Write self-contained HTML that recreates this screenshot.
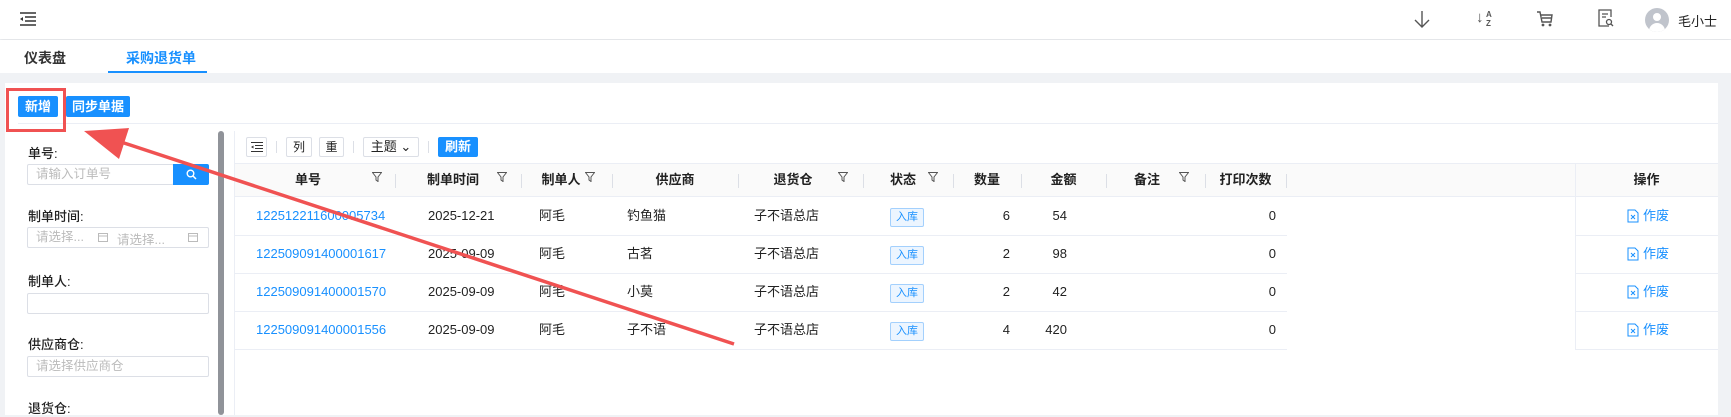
<!DOCTYPE html>
<html><head><meta charset="utf-8"><style>
*{box-sizing:border-box;margin:0;padding:0}
body{width:1731px;height:415px;overflow:hidden;background:#f0f2f5;font-family:"Liberation Sans","Noto Sans CJK SC",sans-serif;font-size:13px;color:#222;position:relative}
.a{position:absolute}
.hdr{left:0;top:0;width:1731px;height:39px;background:#fff;box-shadow:0 1px 3px rgba(0,0,0,.08)}
.tabs{left:0;top:40px;width:1731px;height:33px;background:#fff}
.panel{left:5px;top:83px;width:1713px;height:332px;background:#fff}
.btn{background:#1890ff;color:#fff;font-weight:bold;font-size:13px;text-align:center;line-height:21px;height:21px;border-radius:2px}
.lbl{font-size:13px;color:#222;font-weight:500}
.inp{border:1px solid #dcdfe6;border-radius:2px;height:21px;background:#fff;color:#bbb;font-size:12.5px;line-height:19px;padding-left:8px}
.tb{border:1px solid #dcdfe6;border-radius:2px;height:20px;background:#fff;font-size:12px;text-align:center;line-height:18px}
.th{top:163px;height:34px;background:#fafafa;border-top:1px solid #ebeef5;border-bottom:1px solid #ebeef5}
.hc{top:171px;height:18px;line-height:18px;font-weight:bold;text-align:center}
.sep{top:174px;width:1px;height:14px;background:#dcdfe6}
.flt{top:172px;width:10px;height:10px}
.rl{height:1px;background:#ebeef5}
.c{height:18px;line-height:18px;font-size:13px}
.lnk{color:#1890ff}
.tag{border:1px solid #a3d0fd;background:#ecf5ff;color:#1890ff;font-size:11px;width:34px;height:19px;line-height:17px;text-align:center;border-radius:2px}
.op{color:#1890ff;font-size:13px}
</style></head><body>
<svg width="0" height="0" style="position:absolute"><defs><symbol id="f" viewBox="0 0 10 10"><path d="M0.5 0.5H9.5L6 5V9.5L4 8V5Z" fill="none" stroke="#555" stroke-width="1"/></symbol>
<symbol id="d" viewBox="0 0 12 14"><path d="M1 1H8L11 4V13H1Z" fill="none" stroke="#1890ff" stroke-width="1"/><path d="M4 6L8 10M8 6L4 10" stroke="#1890ff" stroke-width="1"/></symbol></defs></svg>
<div class="a hdr"></div>
<svg class="a" style="left:20px;top:12px" width="16" height="14" viewBox="0 0 16 14"><path d="M0 1H16M5 5H16M5 9H16M0 13H16" stroke="#333" stroke-width="1.5"/><path d="M0 7L3 5V9Z" fill="#333"/></svg>
<svg class="a" style="left:1414px;top:10px" width="16" height="18" viewBox="0 0 16 18"><path d="M8 1V17M1 10L8 17L15 10" stroke="#555" stroke-width="1.4" fill="none"/></svg>
<div class="a" style="left:1476px;top:9px;font-size:10px;color:#555;line-height:9px"><span style="font-size:15px;line-height:18px">↓</span></div>
<div class="a" style="left:1486px;top:10px;font-size:8px;color:#555;line-height:9px;font-weight:bold">A<br>Z</div>
<svg class="a" style="left:1536px;top:10px" width="18" height="18" viewBox="0 0 18 18"><path d="M1 2H4L6 12H15L16 5H5M6 8H15" stroke="#555" stroke-width="1.4" fill="none"/><circle cx="7" cy="15" r="1.4" fill="#555"/><circle cx="14" cy="15" r="1.4" fill="#555"/></svg>
<svg class="a" style="left:1597px;top:8px" width="18" height="20" viewBox="0 0 18 20"><path d="M12 18H2V2H14V9M5 6H11M5 9H9" stroke="#555" stroke-width="1.3" fill="none"/><circle cx="12" cy="14" r="2.5" stroke="#555" stroke-width="1.3" fill="none"/><path d="M14 16L16 18" stroke="#555" stroke-width="1.3"/></svg>
<div class="a" style="left:1645px;top:8px;width:24px;height:24px;border-radius:50%;background:#c0c4cc;overflow:hidden"><div class="a" style="left:8px;top:5px;width:8px;height:8px;border-radius:50%;background:#fff"></div><div class="a" style="left:4px;top:15px;width:16px;height:12px;border-radius:8px 8px 0 0;background:#fff"></div></div>
<div class="a" style="left:1678px;top:11px;font-size:13px">毛小士</div>
<div class="a tabs"></div>
<div class="a" style="left:24px;top:48px;font-size:14px;font-weight:bold;color:#333">仪表盘</div>
<div class="a" style="left:126px;top:48px;font-size:14px;font-weight:bold;color:#1890ff">采购退货单</div>
<div class="a" style="left:108px;top:71px;width:99px;height:2px;background:#1890ff"></div>
<div class="a panel"></div>
<div class="a btn" style="left:18px;top:96px;width:40px">新增</div>
<div class="a btn" style="left:66px;top:96px;width:64px">同步单据</div>
<div class="a" style="left:18px;top:123px;width:1700px;height:1px;background:#ebeef5"></div>
<div class="a" style="left:218px;top:131px;width:6px;height:284px;background:#909399;border-radius:3px"></div>
<div class="a" style="left:234px;top:131px;width:1px;height:284px;background:#ebeef5"></div>
<div class="a lbl" style="left:28px;top:143px">单号:</div>
<div class="a inp" style="left:27px;top:164px;width:147px">请输入订单号</div>
<div class="a" style="left:173px;top:164px;width:36px;height:21px;background:#1890ff;border-radius:0 2px 2px 0"><svg class="a" style="left:13px;top:5px" width="11" height="11" viewBox="0 0 11 11"><circle cx="4.5" cy="4.5" r="3.3" fill="none" stroke="#fff" stroke-width="1.4"/><path d="M7 7L10 10" stroke="#fff" stroke-width="1.5"/></svg></div>
<div class="a lbl" style="left:28px;top:206px">制单时间:</div>
<div class="a inp" style="left:27px;top:227px;width:182px">请选择...</div>
<div class="a" style="left:117px;top:229px;color:#bbb;font-size:12.5px">请选择...</div>
<svg class="a" style="left:98px;top:232px" width="10" height="10"><rect x="0.5" y="1.5" width="9" height="8" fill="none" stroke="#bbb"/><path d="M0 4H10" stroke="#bbb"/></svg>
<svg class="a" style="left:188px;top:232px" width="10" height="10"><rect x="0.5" y="1.5" width="9" height="8" fill="none" stroke="#bbb"/><path d="M0 4H10" stroke="#bbb"/></svg>
<div class="a lbl" style="left:28px;top:271px">制单人:</div>
<div class="a inp" style="left:27px;top:293px;width:182px"></div>
<div class="a lbl" style="left:28px;top:334px">供应商仓:</div>
<div class="a inp" style="left:27px;top:356px;width:182px">请选择供应商仓</div>
<div class="a lbl" style="left:28px;top:398px">退货仓:</div>
<div class="a tb" style="left:246px;top:137px;width:21px"><svg style="margin-top:4px" width="12" height="10" viewBox="0 0 12 10"><path d="M0 0.5H12M4 3.5H12M4 6.5H12M0 9.5H12" stroke="#333"/><path d="M0 5L2.5 3.5V6.5Z" fill="#333"/></svg></div>
<div class="a" style="left:276px;top:141px;width:1px;height:12px;background:#dcdfe6"></div>
<div class="a tb" style="left:286px;top:137px;width:26px">列</div>
<div class="a tb" style="left:319px;top:137px;width:25px">重</div>
<div class="a" style="left:353px;top:141px;width:1px;height:12px;background:#dcdfe6"></div>
<div class="a tb" style="left:363px;top:137px;width:56px;font-size:13px">主题 ⌄</div>
<div class="a" style="left:428px;top:141px;width:1px;height:12px;background:#dcdfe6"></div>
<div class="a btn" style="left:438px;top:137px;width:40px;height:20px;line-height:20px">刷新</div>
<div class="a th" style="left:235px;width:1052px"></div>
<div class="a th" style="left:1287px;width:288px;background:#fafafa"></div>
<div class="a th" style="left:1575px;width:143px;border-left:1px solid #ebeef5"></div>
<div class="a hc" style="left:235px;width:146px">单号</div><svg class="a flt" style="left:372px"><use href="#f"/></svg><div class="a sep" style="left:395px"></div>
<div class="a hc" style="left:408px;width:90px">制单时间</div><svg class="a flt" style="left:497px"><use href="#f"/></svg><div class="a sep" style="left:521px"></div>
<div class="a hc" style="left:530px;width:62px">制单人</div><svg class="a flt" style="left:585px"><use href="#f"/></svg><div class="a sep" style="left:612px"></div>
<div class="a hc" style="left:612px;width:126px">供应商</div><div class="a sep" style="left:738px"></div>
<div class="a hc" style="left:738px;width:110px">退货仓</div><svg class="a flt" style="left:838px"><use href="#f"/></svg><div class="a sep" style="left:863px"></div>
<div class="a hc" style="left:870px;width:66px">状态</div><svg class="a flt" style="left:928px"><use href="#f"/></svg><div class="a sep" style="left:953px"></div>
<div class="a hc" style="left:953px;width:68px">数量</div><div class="a sep" style="left:1021px"></div>
<div class="a hc" style="left:1021px;width:85px">金额</div><div class="a sep" style="left:1106px"></div>
<div class="a hc" style="left:1110px;width:74px">备注</div><svg class="a flt" style="left:1179px"><use href="#f"/></svg><div class="a sep" style="left:1205px"></div>
<div class="a hc" style="left:1205px;width:81px">打印次数</div><div class="a sep" style="left:1286px"></div>
<div class="a hc" style="left:1575px;width:143px">操作</div>

<div class="a rl" style="left:235px;top:235px;width:1052px"></div><div class="a rl" style="left:1575px;top:235px;width:143px"></div>
<div class="a rl" style="left:235px;top:273px;width:1052px"></div><div class="a rl" style="left:1575px;top:273px;width:143px"></div>
<div class="a rl" style="left:235px;top:311px;width:1052px"></div><div class="a rl" style="left:1575px;top:311px;width:143px"></div>
<div class="a rl" style="left:235px;top:349px;width:1052px"></div><div class="a rl" style="left:1575px;top:349px;width:143px"></div>
<div class="a" style="left:1575px;top:197px;width:1px;height:152px;background:#ebeef5"></div>

<div class="a c lnk" style="left:256px;top:207px">122512211600005734</div><div class="a c" style="left:428px;top:207px">2025-12-21</div><div class="a c" style="left:539px;top:207px">阿毛</div><div class="a c" style="left:627px;top:207px">钓鱼猫</div><div class="a c" style="left:754px;top:207px">子不语总店</div><div class="a tag" style="left:890px;top:208px">入库</div><div class="a c" style="left:953px;top:207px;width:57px;text-align:right">6</div><div class="a c" style="left:1021px;top:207px;width:46px;text-align:right">54</div><div class="a c" style="left:1205px;top:207px;width:71px;text-align:right">0</div><svg class="a" style="left:1627px;top:209px" width="12" height="14"><use href="#d"/></svg><div class="a c op" style="left:1643px;top:207px">作废</div>
<div class="a c lnk" style="left:256px;top:245px">122509091400001617</div><div class="a c" style="left:428px;top:245px">2025-09-09</div><div class="a c" style="left:539px;top:245px">阿毛</div><div class="a c" style="left:627px;top:245px">古茗</div><div class="a c" style="left:754px;top:245px">子不语总店</div><div class="a tag" style="left:890px;top:246px">入库</div><div class="a c" style="left:953px;top:245px;width:57px;text-align:right">2</div><div class="a c" style="left:1021px;top:245px;width:46px;text-align:right">98</div><div class="a c" style="left:1205px;top:245px;width:71px;text-align:right">0</div><svg class="a" style="left:1627px;top:247px" width="12" height="14"><use href="#d"/></svg><div class="a c op" style="left:1643px;top:245px">作废</div>
<div class="a c lnk" style="left:256px;top:283px">122509091400001570</div><div class="a c" style="left:428px;top:283px">2025-09-09</div><div class="a c" style="left:539px;top:283px">阿毛</div><div class="a c" style="left:627px;top:283px">小莫</div><div class="a c" style="left:754px;top:283px">子不语总店</div><div class="a tag" style="left:890px;top:284px">入库</div><div class="a c" style="left:953px;top:283px;width:57px;text-align:right">2</div><div class="a c" style="left:1021px;top:283px;width:46px;text-align:right">42</div><div class="a c" style="left:1205px;top:283px;width:71px;text-align:right">0</div><svg class="a" style="left:1627px;top:285px" width="12" height="14"><use href="#d"/></svg><div class="a c op" style="left:1643px;top:283px">作废</div>
<div class="a c lnk" style="left:256px;top:321px">122509091400001556</div><div class="a c" style="left:428px;top:321px">2025-09-09</div><div class="a c" style="left:539px;top:321px">阿毛</div><div class="a c" style="left:627px;top:321px">子不语</div><div class="a c" style="left:754px;top:321px">子不语总店</div><div class="a tag" style="left:890px;top:322px">入库</div><div class="a c" style="left:953px;top:321px;width:57px;text-align:right">4</div><div class="a c" style="left:1021px;top:321px;width:46px;text-align:right">420</div><div class="a c" style="left:1205px;top:321px;width:71px;text-align:right">0</div><svg class="a" style="left:1627px;top:323px" width="12" height="14"><use href="#d"/></svg><div class="a c op" style="left:1643px;top:321px">作废</div>

<div class="a" style="left:6px;top:88px;width:60px;height:44px;border:3px solid #f05252"></div>
<svg class="a" style="left:0;top:0" width="1731" height="415"><line x1="734" y1="344" x2="115" y2="140" stroke="#f05252" stroke-width="3.5"/><path d="M84 131L129 128L119 159Z" fill="#f05252"/></svg>
</body></html>
